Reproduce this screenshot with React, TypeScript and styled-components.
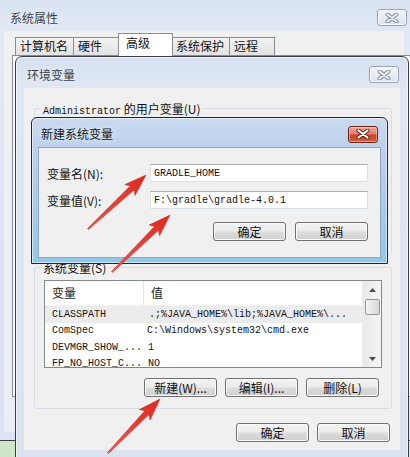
import React from "react";
import styled, { createGlobalStyle, css } from "styled-components";

const CJK = `"Noto Sans CJK SC", "Liberation Sans", sans-serif`;
const MONO = `"Liberation Mono", "Noto Sans CJK SC", monospace`;

const Global = createGlobalStyle`
  html, body { margin: 0; padding: 0; }
  body {
    width: 410px; height: 457px; overflow: hidden;
    background: #cfe7c8;
    font-family: ${CJK};
    font-size: 12px;
    color: #111;
  }
  * { box-sizing: border-box; }
`;

const Desktop = styled.div`
  position: relative;
  width: 410px;
  height: 457px;
  overflow: hidden;
  background: #cfe7c8;
`;

/* ---------- generic window parts ---------- */

const TitleText = styled.span<{ $dim?: boolean }>`
  font-family: ${CJK};
  font-size: 12px;
  line-height: 14px;
  color: ${(p) => (p.$dim ? "#3a3f48" : "#151a22")};
  text-shadow: 0 0 6px rgba(255, 255, 255, 0.9);
`;

const CloseBtn = styled.div<{ $red?: boolean }>`
  width: 30px;
  height: 17px;
  border-radius: 3px;
  display: flex;
  align-items: center;
  justify-content: center;
  ${(p) =>
    p.$red
      ? css`
          border: 1px solid #6e2418;
          background: linear-gradient(#eba898 0%, #e07d66 45%, #c9452b 55%, #d35c3d 100%);
          box-shadow: inset 0 0 0 1px rgba(255, 220, 210, 0.5);
        `
      : css`
          border: 1px solid #9aa4b6;
          background: linear-gradient(#f3f6fa 0%, #e9eef5 50%, #dce3ee 100%);
          box-shadow: inset 0 0 0 1px rgba(255, 255, 255, 0.7);
        `}
`;

const XIcon: React.FC<{ red?: boolean }> = ({ red }) => (
  <svg width="14" height="10" viewBox="0 0 14 10">
    <path d="M2.5 1.5 L11.5 8.5 M11.5 1.5 L2.5 8.5" stroke={red ? "#5a1a10" : "#7a8496"} strokeWidth="4" strokeLinecap="round" />
    <path d="M2.5 1.5 L11.5 8.5 M11.5 1.5 L2.5 8.5" stroke={red ? "#ffffff" : "#eef1f6"} strokeWidth="2.2" strokeLinecap="round" />
  </svg>
);

const Button = styled.div<{ $w?: number }>`
  width: ${(p) => p.$w ?? 73}px;
  height: 19px;
  border: 1px solid #707070;
  border-radius: 3px;
  background: linear-gradient(#f3f3f3 0%, #ebebeb 48%, #dddddd 52%, #cfcfcf 100%);
  box-shadow: inset 0 0 0 1px #fbfbfb;
  display: flex;
  align-items: center;
  justify-content: center;
  font-family: ${CJK};
  font-size: 12px;
  line-height: 14px;
  color: #111;
`;

const ButtonRow = styled.div<{ $gap: number; $pr: number; $mt: number }>`
  display: flex;
  justify-content: flex-end;
  gap: ${(p) => p.$gap}px;
  padding-right: ${(p) => p.$pr}px;
  margin-top: ${(p) => p.$mt}px;
`;

/* ---------- outer window: 系统属性 ---------- */

const SysWindow = styled.div`
  position: absolute;
  left: 0;
  top: 0;
  width: 412px;
  height: 441px;
  background: linear-gradient(#d7e1f0 0px, #e2e9f5 30px, #dfe4f4 200px, #dde2f4 100%);
  border-bottom: 1px solid #3b3f4a;
  display: flex;
  flex-direction: column;
`;

const SysTitleBar = styled.div`
  height: 31px;
  padding: 4px 5px 0 10px;
  display: flex;
  align-items: center;
  justify-content: space-between;
`;

const SysBody = styled.div`
  flex: 1;
  margin: 0 8px 8px 4px;
  background: linear-gradient(#f0f0f0 0%, #eceef6 100%);
  padding: 6px 0 0 8px;
  display: flex;
  flex-direction: column;
`;

const TabRow = styled.div`
  display: flex;
  align-items: flex-end;
  height: 18px;
  margin-left: 3px;
`;

const Tab = styled.div<{ $w: number; $active?: boolean }>`
  width: ${(p) => p.$w}px;
  height: 18px;
  border: 1px solid #898c95;
  border-bottom: none;
  margin-right: -1px;
  padding-left: 4px;
  background: linear-gradient(#f3f3f3, #e2e2e2);
  font-family: ${CJK};
  font-size: 12px;
  line-height: 16px;
  color: #111;
  ${(p) =>
    p.$active &&
    css`
      position: relative;
      z-index: 1;
      height: 23px;
      margin: 0 -2px -1px -2px;
      padding-left: 7px;
      background: #ffffff;
      line-height: 18px;
    `}
`;

const TabPanel = styled.div`
  width: 420px;
  height: 342px;
  margin-left: 0px;
  border: 1px solid #898c95;
  background: #f7f8fc;
`;

/* ---------- 环境变量 ---------- */

const EnvWindow = styled.div`
  position: absolute;
  left: 15px;
  top: 56px;
  width: 394px;
  height: 410px;
  border: 1px solid #3a3e47;
  border-radius: 7px 7px 0 0;
  background: linear-gradient(#d6e0ef 0px, #dfe7f3 30px, #dbe3f1 100%);
  box-shadow: inset 0 0 0 1px rgba(255, 255, 255, 0.6);
  display: flex;
  flex-direction: column;
`;

const EnvTitleBar = styled.div`
  height: 31px;
  padding: 4px 9px 0 11px;
  display: flex;
  align-items: center;
  justify-content: space-between;
`;

const EnvBody = styled.div`
  height: 362px;
  margin: 0 8px;
  background: #f0f0f0;
  padding-top: 20px;
  display: flex;
  flex-direction: column;
`;

const GroupBox = styled.div<{ $h: number; $mt?: number }>`
  position: relative;
  height: ${(p) => p.$h}px;
  margin: ${(p) => p.$mt ?? 0}px 8px 0 10px;
  border: 1px solid #d5dfe5;
  border-radius: 3px;
  display: flex;
  flex-direction: column;
`;

const GroupLabel = styled.span`
  position: absolute;
  left: 6px;
  top: -8px;
  padding: 0 2px;
  background: #f0f0f0;
  font-family: ${CJK};
  font-size: 12px;
  line-height: 15px;
  color: #111;
  white-space: nowrap;
`;

const Mono = styled.span`
  font-family: ${MONO};
  font-size: 10px;
`;

/* list */

const ListBox = styled.div`
  margin: 12px 9px 0 9px;
  height: 88px;
  border: 1px solid #828790;
  background: #ffffff;
  display: flex;
  overflow: hidden;
`;

const ListMain = styled.div`
  flex: 1;
  display: flex;
  flex-direction: column;
  overflow: hidden;
`;

const HeaderRow = styled.div`
  height: 25px;
  flex-shrink: 0;
  display: flex;
  align-items: stretch;
  border-bottom: 1px solid #f2f2f2;
`;

const HeaderCell = styled.div<{ $w?: number }>`
  ${(p) => (p.$w ? `width: ${p.$w}px;` : "flex: 1;")}
  display: flex;
  align-items: center;
  padding-left: 7px;
  padding-bottom: 1px;
  font-family: ${CJK};
  font-size: 12px;
  color: #1a1a1a;
  ${(p) => p.$w && "border-right: 1px solid #e5e5e5;"}
`;

const Row = styled.div<{ $sel?: boolean }>`
  height: 16.5px;
  flex-shrink: 0;
  display: flex;
  align-items: center;
  background: ${(p) => (p.$sel ? "#ececec" : "transparent")};
  font-family: ${MONO};
  font-size: 10px;
  color: #111;
  white-space: nowrap;
`;

const Cell = styled.div<{ $w?: number; $pl: number }>`
  ${(p) => (p.$w ? `width: ${p.$w}px;` : "flex: 1;")}
  padding-left: ${(p) => p.$pl}px;
  overflow: hidden;
`;

const ScrollBar = styled.div`
  width: 19px;
  display: flex;
  flex-direction: column;
  align-items: center;
  background: linear-gradient(90deg, #e9e9e9, #f5f5f5);
  border-left: 1px solid #ededed;
`;

const ScrollArrow = styled.div`
  height: 17px;
  display: flex;
  align-items: center;
  justify-content: center;
`;

const Thumb = styled.div`
  width: 15px;
  height: 16px;
  margin-top: 1px;
  border: 1px solid #979797;
  border-radius: 2px;
  background: linear-gradient(90deg, #f4f4f4, #e2e2e2 60%, #d6d6d6);
`;

const Spacer = styled.div`
  flex: 1;
`;

/* ---------- 新建系统变量 ---------- */

const NewWindow = styled.div`
  position: absolute;
  left: 31px;
  top: 117px;
  width: 357px;
  height: 147px;
  border: 1px solid #1d2633;
  border-radius: 6px 6px 0 0;
  background: linear-gradient(#cadbf0 0px, #bcd1ec 29px, #a9cbe9 60%, #92c7e6 100%);
  box-shadow: inset 0 0 0 1px rgba(255, 255, 255, 0.55);
  display: flex;
  flex-direction: column;
`;

const NewTitleBar = styled.div`
  height: 29px;
  padding: 3px 9px 0 9px;
  display: flex;
  align-items: center;
  justify-content: space-between;
`;

const NewBody = styled.div`
  height: 111px;
  margin: 0 6px;
  background: #f0f0f0;
  border: 1px solid #8fa6c4;
  padding: 16px 12px 0 8px;
  display: flex;
  flex-direction: column;
  gap: 9px;
`;

const FieldRow = styled.div`
  display: flex;
  align-items: center;
  height: 18px;
`;

const FieldLabel = styled.div`
  width: 103px;
  font-family: ${CJK};
  font-size: 12px;
  color: #111;
`;

const TextBox = styled.div`
  width: 218px;
  height: 18px;
  border: 1px solid #dbdfe6;
  border-top-color: #abadb3;
  background: #ffffff;
  padding-left: 3px;
  display: flex;
  align-items: center;
  font-family: ${MONO};
  font-size: 10px;
  color: #111;
  white-space: nowrap;
`;

/* ---------- annotation arrows ---------- */

const Overlay = styled.svg`
  position: absolute;
  left: 0;
  top: 0;
  width: 410px;
  height: 457px;
  pointer-events: none;
`;

type Pt = [number, number];
function arrowPoints(tail: Pt, head: Pt, headLen = 19, headW = 15, tailW = 1.5, neckW = 5.5) {
  const dx = head[0] - tail[0];
  const dy = head[1] - tail[1];
  const L = Math.hypot(dx, dy);
  const ux = dx / L;
  const uy = dy / L;
  const nx = -uy;
  const ny = ux;
  const bx = head[0] - ux * headLen;
  const by = head[1] - uy * headLen;
  const bbx = head[0] - ux * (headLen + 3);
  const bby = head[1] - uy * (headLen + 3);
  const p = (x: number, y: number, w: number, s: number) =>
    `${(x + (nx * w * s) / 2).toFixed(1)},${(y + (ny * w * s) / 2).toFixed(1)}`;
  return [
    p(tail[0], tail[1], tailW, 1),
    p(bx, by, neckW, 1),
    p(bbx, bby, headW, 1),
    `${head[0]},${head[1]}`,
    p(bbx, bby, headW, -1),
    p(bx, by, neckW, -1),
    p(tail[0], tail[1], tailW, -1),
  ].join(" ");
}

const arrows: [Pt, Pt][] = [
  [[88, 229], [146, 175]],
  [[112, 272], [170, 215]],
  [[108, 453], [160, 399]],
];

const Arrow: React.FC<{ tail: Pt; head: Pt }> = ({ tail, head }) => (
  <polygon points={arrowPoints(tail, head)} fill="url(#arrowGrad)" stroke="#c8221a" strokeWidth="0.5" strokeLinejoin="round" />
);

const TriUp = () => (
  <svg width="7" height="4" viewBox="0 0 7 4">
    <path d="M0 4 L3.5 0 L7 4 Z" fill="#4d4d4d" />
  </svg>
);
const TriDown = () => (
  <svg width="7" height="4" viewBox="0 0 7 4">
    <path d="M0 0 L3.5 4 L7 0 Z" fill="#4d4d4d" />
  </svg>
);

const rows = [
  { name: "CLASSPATH", value: ".;%JAVA_HOME%\\lib;%JAVA_HOME%\\...", sel: true, pl: 5 },
  { name: "ComSpec", value: "C:\\Windows\\system32\\cmd.exe", pl: 3 },
  { name: "DEVMGR_SHOW_...", value: "1", pl: 4 },
  { name: "FP_NO_HOST_C...", value: "NO", pl: 4 },
];

export default function App() {
  return (
    <Desktop>
      <Global />
      <SysWindow>
        <SysTitleBar>
          <TitleText $dim>系统属性</TitleText>
          <CloseBtn>
            <XIcon />
          </CloseBtn>
        </SysTitleBar>
        <SysBody>
          <TabRow>
            <Tab $w={59}>计算机名</Tab>
            <Tab $w={48}>硬件</Tab>
            <Tab $w={55} $active>高级</Tab>
            <Tab $w={59}>系统保护</Tab>
            <Tab $w={46}>远程</Tab>
          </TabRow>
          <TabPanel />
        </SysBody>
      </SysWindow>

      <EnvWindow>
        <EnvTitleBar>
          <TitleText $dim>环境变量</TitleText>
          <CloseBtn>
            <XIcon />
          </CloseBtn>
        </EnvTitleBar>
        <EnvBody>
          <GroupBox $h={147}>
            <GroupLabel>
              <Mono>Administrator</Mono> 的用户变量(U)
            </GroupLabel>
          </GroupBox>
          <GroupBox $h={142} $mt={12}>
            <GroupLabel>系统变量(S)</GroupLabel>
            <ListBox>
              <ListMain>
                <HeaderRow>
                  <HeaderCell $w={99}>变量</HeaderCell>
                  <HeaderCell>值</HeaderCell>
                </HeaderRow>
                {rows.map((r) => (
                  <Row key={r.name} $sel={r.sel}>
                    <Cell $w={99} $pl={7}>
                      {r.name}
                    </Cell>
                    <Cell $pl={r.pl}>{r.value}</Cell>
                  </Row>
                ))}
              </ListMain>
              <ScrollBar>
                <ScrollArrow>
                  <TriUp />
                </ScrollArrow>
                <Thumb />
                <Spacer />
                <ScrollArrow>
                  <TriDown />
                </ScrollArrow>
              </ScrollBar>
            </ListBox>
            <ButtonRow $gap={8} $pr={12} $mt={10}>
              <Button>新建(W)...</Button>
              <Button>编辑(I)...</Button>
              <Button>删除(L)</Button>
            </ButtonRow>
          </GroupBox>
          <ButtonRow $gap={8} $pr={10} $mt={14}>
            <Button>确定</Button>
            <Button>取消</Button>
          </ButtonRow>
        </EnvBody>
      </EnvWindow>

      <NewWindow>
        <NewTitleBar>
          <TitleText>新建系统变量</TitleText>
          <CloseBtn $red>
            <XIcon red />
          </CloseBtn>
        </NewTitleBar>
        <NewBody>
          <FieldRow>
            <FieldLabel>变量名(N):</FieldLabel>
            <TextBox>GRADLE_HOME</TextBox>
          </FieldRow>
          <FieldRow>
            <FieldLabel>变量值(V):</FieldLabel>
            <TextBox>F:\gradle\gradle-4.0.1</TextBox>
          </FieldRow>
          <ButtonRow $gap={9} $pr={0} $mt={4}>
            <Button>确定</Button>
            <Button>取消</Button>
          </ButtonRow>
        </NewBody>
      </NewWindow>

      <Overlay viewBox="0 0 410 457">
        <defs>
          <linearGradient id="arrowGrad" x1="0" y1="1" x2="1" y2="0">
            <stop offset="0" stopColor="#f0564c" />
            <stop offset="1" stopColor="#dd2a20" />
          </linearGradient>
        </defs>
        {arrows.map(([t, h], i) => (
          <Arrow key={i} tail={t} head={h} />
        ))}
      </Overlay>
    </Desktop>
  );
}
